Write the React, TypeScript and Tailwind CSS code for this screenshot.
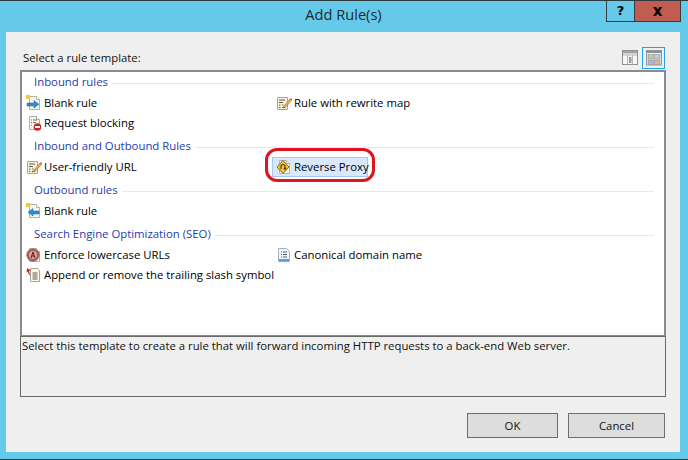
const FONT = "font-['Open_Sans','Noto_Sans',sans-serif]";

function Page({ children }: { children?: React.ReactNode }) {
  return (
    <>
      <path d="M3.5 1.5h7l3 3v10h-10z" fill="#fbf8ea" stroke="#b4b2a2" />
      <path d="M10.5 1.5v3h3" fill="#fff" stroke="#b4b2a2" />
      {children}
    </>
  );
}

function Icon({ children }: { children: React.ReactNode }) {
  return (
    <svg width="16" height="16" viewBox="0 0 16 16" className="shrink-0">
      {children}
    </svg>
  );
}

const BlankIn = () => (
  <Icon>
    <Page />
    <rect x="0" y="0" width="4" height="4" fill="#f4c63d" />
    <path d="M1 8h7V5.5l5 3.7-5 3.8V11H1z" fill="#2a8fdc" stroke="#17609f" strokeWidth=".5" />
  </Icon>
);
const BlankOut = () => (
  <Icon>
    <Page />
    <rect x="0" y="0" width="4" height="4" fill="#f4c63d" />
    <path d="M13 8H7V5.5L2 9.2 7 13v-2h6z" fill="#2a8fdc" stroke="#17609f" strokeWidth=".5" />
  </Icon>
);
const Block = () => (
  <Icon>
    <Page>
      <path d="M5 5h1M5 7.5h1M5 10h1M7 5h4M7 7.5h3" stroke="#6f6f60" />
    </Page>
    <circle cx="11.5" cy="12" r="3.8" fill="#c4262e" />
    <rect x="9" y="11" width="5" height="2" fill="#fff" />
  </Icon>
);
const RewriteMap = () => (
  <Icon>
    <path d="M1.5 2.5h10v12h-10z" fill="#f7f3df" stroke="#a8a696" />
    <path d="M3 5h6M3 7.5h4M3 10h1.5M6 10h1.5M3 12.5h1.5M6 12.5h3" stroke="#5c5c50" />
    <path d="M8 11l6-7 1.5 1.3-6 7-2 .7z" fill="#efb04a" stroke="#9c6a24" strokeWidth=".6" />
    <path d="M14 4l1.5 1.3.5-1-1-1.2z" fill="#d8434b" />
  </Icon>
);
const Proxy = () => (
  <Icon>
    <Page />
    <path d="M7 1.5l6 6.5-6 6.5L1 8z" fill="#f6c22e" stroke="#8b6a15" />
    <path d="M5 10V7.5a2 2 0 0 1 4 0V10M8 9l1 1.3L10 9" fill="none" stroke="#333" strokeWidth="1.1" />
  </Icon>
);
const Lower = () => (
  <Icon>
    <Page />
    <circle cx="7" cy="8" r="6.2" fill="#b9504f" stroke="#7d7d7d" />
    <circle cx="7" cy="8" r="4" fill="#d9a5a2" />
    <path d="M5 11l2-6 2 6M5.7 9h2.6" fill="none" stroke="#5a1f1f" />
  </Icon>
);
const Trailing = () => (
  <Icon>
    <path d="M4.5 1.5h7l2 2v11h-9z" fill="#fbf8ea" stroke="#a8a696" />
    <path d="M6.5 6h5M6.5 8h5M6.5 10h5M6.5 12h5" stroke="#5c5c50" />
    <path d="M1 1l4 2.5-2 .8L4 7.5 3 8 1.8 4.8.5 5.5z" fill="#c4262e" />
  </Icon>
);
const Canonical = () => (
  <Icon>
    <path d="M2.5 1.5h8l3 3v10h-11z" fill="#f2f6fa" stroke="#9fb0c0" />
    <path d="M5 5h1M7 5h4M5 7.5h1M7 7.5h4M5 10h1M7 10h4" stroke="#55606a" />
    <rect x="3" y="12" width="10" height="2.5" fill="#5aa4dc" />
  </Icon>
);

function Header({ title }: { title: string }) {
  return (
    <div className="flex h-[20px] items-center gap-[4px] pr-[10px]">
      <span className="text-[#2440ad]">{title}</span>
      <span className="h-px flex-1 translate-y-[1px] bg-[#e3e9ef]" />
    </div>
  );
}

function Item({ icon, label }: { icon: React.ReactNode; label: string }) {
  return (
    <div className="flex h-[20px] items-center gap-[2px] whitespace-nowrap text-black">
      {icon}
      <span>{label}</span>
    </div>
  );
}

function Group({ title, children, h }: { title: string; children: React.ReactNode; h: string }) {
  return (
    <div>
      <div className="pl-[12px]">
        <Header title={title} />
      </div>
      <div className={`mt-[1px] ml-[4px] grid grid-cols-[250px_1fr] ${h}`}>{children}</div>
    </div>
  );
}

export default function App() {
  return (
    <div className={`${FONT} flex h-[460px] w-[688px] flex-col overflow-hidden border-y border-[#2f3a40] bg-[#65c9ea] text-[11.35px] leading-[20px]`}>
      <div className="flex h-[30px] shrink-0 items-start">
        <div className="flex-1 pt-[3px] pl-[81px] text-center text-[14.6px] leading-[20px] text-[#1a2a30]">Add Rule(s)</div>
        <div className="mr-[7px] flex h-[21px] border-x border-b border-[#333c40]">
          <div className="flex w-[27px] items-center justify-center font-['DejaVu_Sans',sans-serif] text-[13px] font-bold text-black">?</div>
          <div className="flex w-[46px] items-center justify-center border-l border-[#333c40] bg-[#c35c50] font-['DejaVu_Sans',sans-serif] text-[15px] font-bold text-black">x</div>
        </div>
      </div>

      <div className="mx-[6px] flex h-[421px] w-[674px] flex-col border-t border-[#9db7c6] bg-[#efefef] px-[14px]">
        <div className="flex h-[38px] shrink-0 items-center justify-between pt-[14px] pl-[3px] pr-[1px]">
          <span className="text-[#111]">Select a rule template:</span>
          <div className="flex items-center gap-[4px]">
            <svg width="16" height="16" viewBox="0 0 16 16">
              <rect x=".5" y=".5" width="15" height="14" fill="#f6f6f6" stroke="#8f8f8f" />
              <rect x="1" y="1" width="14" height="2.5" fill="#a5a5a5" />
              <path d="M1 5h14M5.5 5v9.5M10.5 5v9.5" stroke="#b5b5b5" />
              <path d="M7 8h2.5M7 10h2.5M7 12h2.5" stroke="#444" />
            </svg>
            <div className="flex h-[22px] w-[23px] items-center justify-center border border-[#1ea7e8]">
              <svg width="16" height="16" viewBox="0 0 16 16">
                <rect x=".5" y=".5" width="15" height="14.5" fill="#eef0f2" stroke="#8f98a2" />
                <rect x="1" y="1" width="14" height="2" fill="#8f8f8f" />
                <rect x="2" y="4.5" width="5.5" height="4.5" fill="#b9cf9a" stroke="#888" strokeWidth=".5" />
                <rect x="8.5" y="4.5" width="5.5" height="4.5" fill="#a8d2ea" stroke="#888" strokeWidth=".5" />
                <rect x="2" y="10" width="5.5" height="4.5" fill="#b5b0e0" stroke="#888" strokeWidth=".5" />
                <rect x="8.5" y="10" width="5.5" height="4.5" fill="#e6b090" stroke="#888" strokeWidth=".5" />
              </svg>
            </div>
          </div>
        </div>

        <div className="relative h-[266px] shrink-0 border-x-2 border-t-2 border-b border-[#8a8a90] bg-white">
          <Group title="Inbound rules" h="h-[40px]">
            <Item icon={<BlankIn />} label="Blank rule" />
            <Item icon={<RewriteMap />} label="Rule with rewrite map" />
            <Item icon={<Block />} label="Request blocking" />
          </Group>
          <div className="mt-[3px]">
            <Group title="Inbound and Outbound Rules" h="h-[20px]">
              <Item icon={<RewriteMap />} label="User-friendly URL" />
              <div className="relative">
                <div className="absolute -left-[4px] top-0 h-[20px] w-[96px] border border-[#a9c8ee] bg-[#d9e8fb]" />
                <div className="relative"><Item icon={<Proxy />} label="Reverse Proxy" /></div>
              </div>
            </Group>
          </div>
          <div className="mt-[3px]">
            <Group title="Outbound rules" h="h-[20px]">
              <Item icon={<BlankOut />} label="Blank rule" />
            </Group>
          </div>
          <div className="mt-[3px]">
            <Group title="Search Engine Optimization (SEO)" h="h-[40px]">
              <Item icon={<Lower />} label="Enforce lowercase URLs" />
              <Item icon={<Canonical />} label="Canonical domain name" />
              <Item icon={<Trailing />} label="Append or remove the trailing slash symbol" />
            </Group>
          </div>
          <div className="absolute left-[243px] top-[76px] h-[34px] w-[110px] rounded-[12px] border-[3px] border-[#e0141e]" />
        </div>

        <div className="h-[61px] shrink-0 border border-[#696969] pl-[1px] leading-[17px] text-[#111]">
          Select this template to create a rule that will forward incoming HTTP requests to a back-end Web server.
        </div>

        <div className="mt-[16px] flex justify-end gap-[10px] pr-[1px]">
          <button className="h-[25px] w-[91px] border border-[#3f78a8] bg-[#dddddd] text-[#111]">OK</button>
          <button className="h-[25px] w-[97px] border border-[#707070] bg-[#dddddd] text-[#111]">Cancel</button>
        </div>
      </div>
    </div>
  );
}
